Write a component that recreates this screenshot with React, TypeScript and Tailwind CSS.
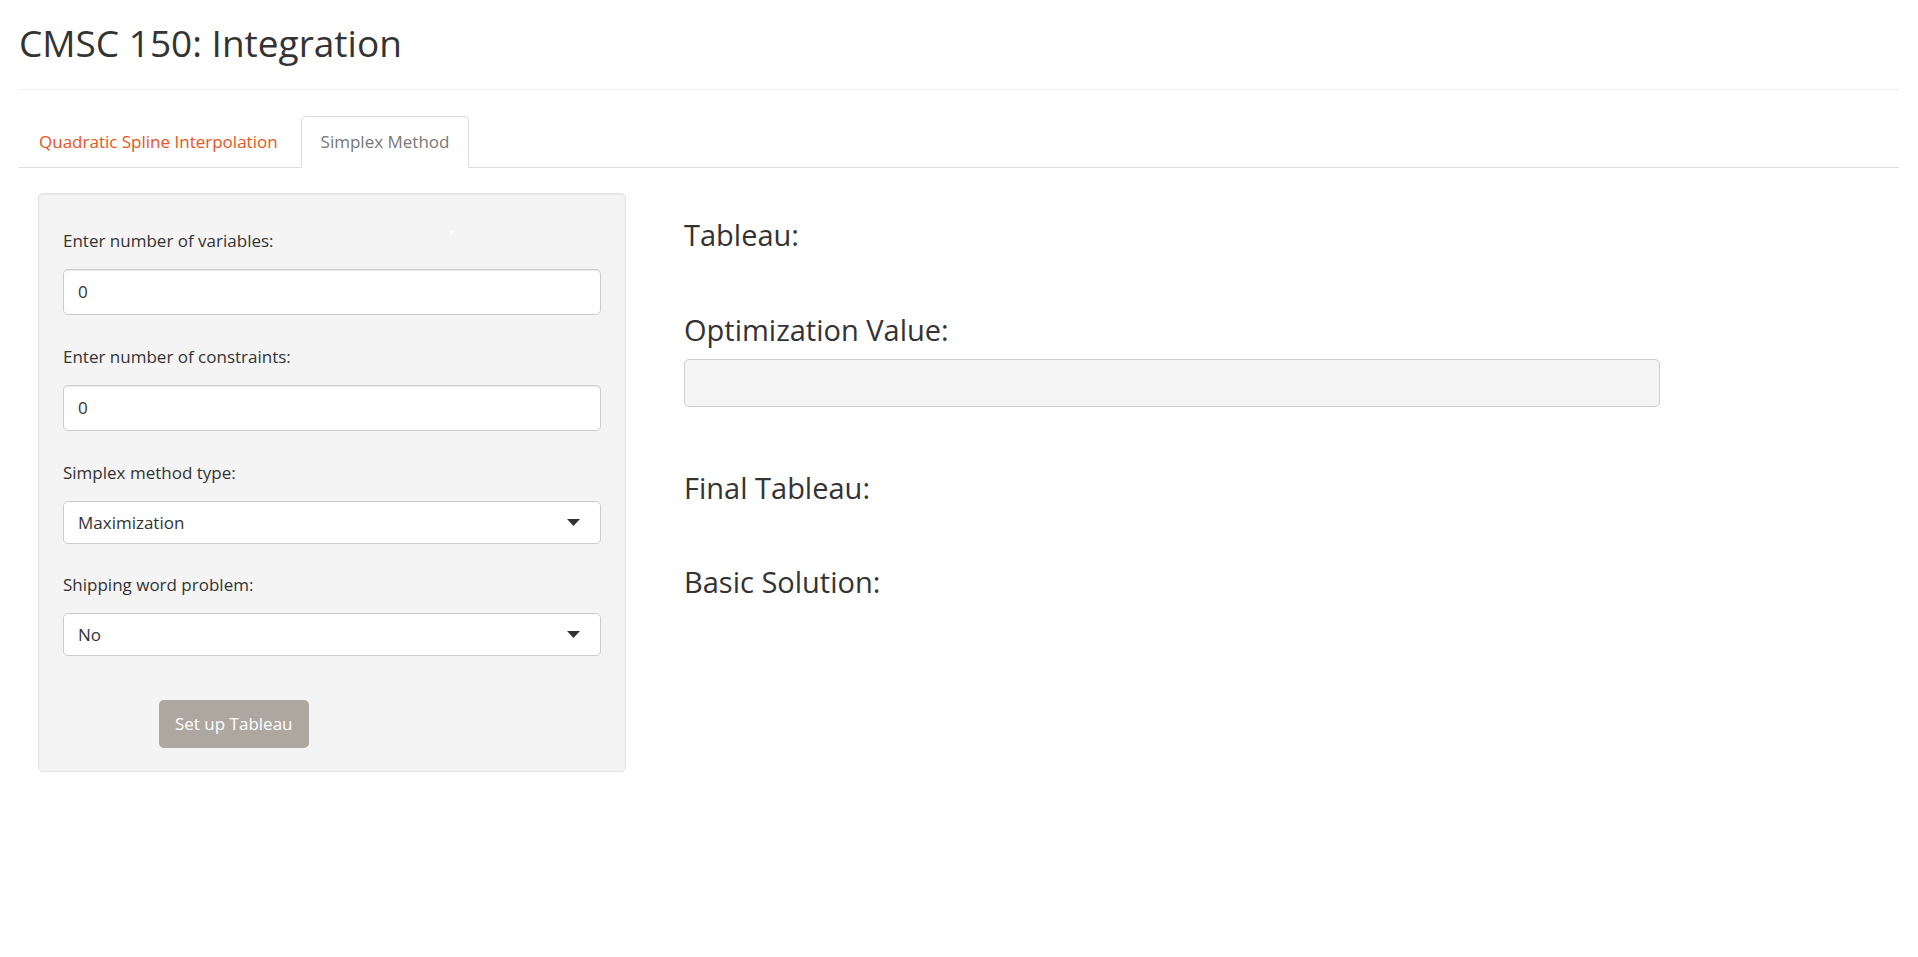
const FONT = "font-['Open_Sans',_'Noto_Sans',_sans-serif]";

type FieldProps = {
  label: string;
  children: React.ReactNode;
  className?: string;
};

const Field = ({ label, children, className }: FieldProps) => (
  <div className={className}>
    <label className="block text-[17px] leading-[25px] text-[#333] mb-[16px]">
      {label}
    </label>
    {children}
  </div>
);

const NumberInput = ({ value }: { value: string }) => (
  <div className="flex h-[46px] items-center rounded-[5px] border border-[#ccc] bg-white px-[14px] text-[17px] text-[#333] shadow-[inset_0_1px_1px_rgba(0,0,0,0.075)]">
    {value}
  </div>
);

const SelectBox = ({ value }: { value: string }) => (
  <div className="flex h-[43px] items-center justify-between rounded-[5px] border border-[#ccc] bg-white pl-[14px] pr-[20px] text-[17px] text-[#333]">
    <span>{value}</span>
    <svg width="13" height="7" viewBox="0 0 13 7" aria-hidden>
      <polygon points="0,0 13,0 6.5,7" fill="#333" />
    </svg>
  </div>
);

export default function App() {
  return (
    <div className={`${FONT} min-h-screen bg-white px-[19px] text-[#333]`}>
      <h2 className="pt-[22px] text-[37px] leading-[41px] font-normal text-[#333]">
        CMSC 150: Integration
      </h2>
      <hr className="mt-[26px] border-0 border-t border-[#eee]" />

      <ul className="mt-[26px] flex border-b border-[#ddd]">
        <li className="-mb-px mr-[3px]">
          <a className="block rounded-t-[5px] border border-transparent px-[19px] pt-[12px] pb-[13px] text-[17px] leading-[25px] text-[#e95420]">
            Quadratic Spline Interpolation
          </a>
        </li>
        <li className="-mb-px">
          <a className="block rounded-t-[5px] border border-[#ddd] border-b-white bg-white px-[19px] pt-[12px] pb-[13px] text-[17px] leading-[25px] text-[#777]">
            Simplex Method
          </a>
        </li>
      </ul>

      <div className="mt-[25px] flex items-start pl-[19px]">
        <div className="relative w-[588px] rounded-[5px] border border-[#e3e3e3] bg-[#f4f4f4] px-[24px] pt-[34px] pb-[23px] shadow-[inset_0_1px_1px_rgba(0,0,0,0.05)]">
          <span className="absolute left-[411px] top-[37px] h-[3px] w-[3px] rounded-full bg-white" />
          <Field label="Enter number of variables:">
            <NumberInput value="0" />
          </Field>
          <Field label="Enter number of constraints:" className="mt-[29px]">
            <NumberInput value="0" />
          </Field>
          <Field label="Simplex method type:" className="mt-[29px]">
            <SelectBox value="Maximization" />
          </Field>
          <Field label="Shipping word problem:" className="mt-[28px]">
            <SelectBox value="No" />
          </Field>
          <button className="mt-[44px] ml-[96px] h-[48px] rounded-[5px] bg-[#aea79f] px-[16px] text-[17px] text-white">
            Set up Tableau
          </button>
        </div>

        <div className="flex-1 pl-[58px]">
          <h3 className="mt-[25px] text-[29px] leading-[33px] font-normal">Tableau:</h3>
          <h3 className="mt-[62px] text-[29px] leading-[33px] font-normal">
            Optimization Value:
          </h3>
          <div className="mt-[13px] h-[48px] w-[976px] rounded-[5px] border border-[#ccc] bg-[#f5f5f5]" />
          <h3 className="mt-[64px] text-[29px] leading-[33px] font-normal">Final Tableau:</h3>
          <h3 className="mt-[61px] text-[29px] leading-[33px] font-normal">Basic Solution:</h3>
        </div>
      </div>
    </div>
  );
}
